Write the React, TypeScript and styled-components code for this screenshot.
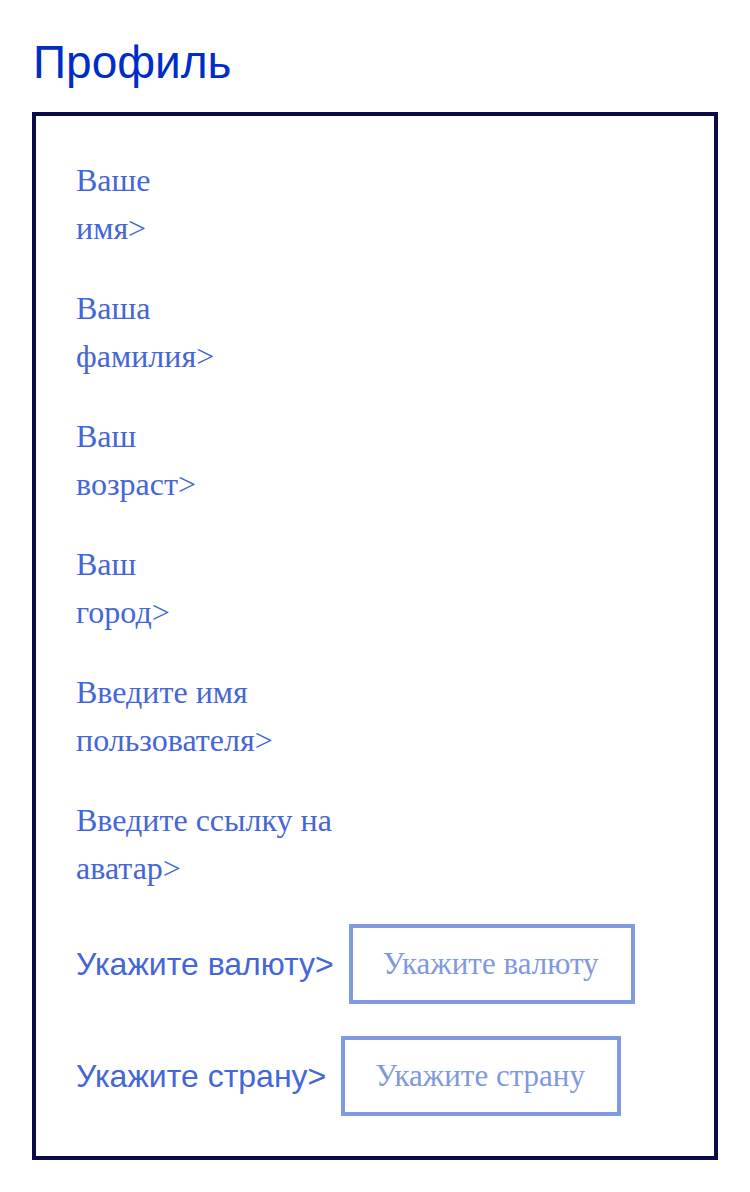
import React from "react";
import styled, { createGlobalStyle } from "styled-components";

const GlobalStyle = createGlobalStyle`
  body {
    margin: 0;
    background: #ffffff;
  }
`;

const SPagina = styled.div`
  padding: 36px 32px 0 32px;
  width: 686px;
`;

const STitulo = styled.h1`
  margin: 0 0 24px 1px;
  font-family: "Liberation Sans", Arial, sans-serif;
  font-weight: 400;
  font-size: 46px;
  line-height: 52px;
  color: #002cc8;
`;

const SCaja = styled.form`
  box-sizing: border-box;
  border: 4px solid #0b0b48;
  padding: 40px 40px 40px 40px;
  display: flex;
  flex-direction: column;
  gap: 32px;
`;

const SEtiqueta = styled.label`
  display: block;
  font-family: "Liberation Serif", "Times New Roman", serif;
  font-size: 32px;
  line-height: 48px;
  color: #4466d6;
`;

const SFila = styled.div`
  display: flex;
  align-items: center;
  gap: 15px;
`;

const SEtiquetaSans = styled.label`
  font-family: "Liberation Sans", Arial, sans-serif;
  font-size: 32px;
  color: #4466d6;
`;

const SCampo = styled.input<{ $ancho: number }>`
  box-sizing: border-box;
  height: 80px;
  width: ${(p) => p.$ancho}px;
  border: 4px solid #7f9ae0;
  padding: 0 0 0 30px;
  font-family: "Liberation Serif", "Times New Roman", serif;
  font-size: 31px;
  outline: none;
  &::placeholder {
    color: #8099de;
  }
`;

const etiquetas: [string, string][] = [
  ["Ваше", "имя>"],
  ["Ваша", "фамилия>"],
  ["Ваш", "возраст>"],
  ["Ваш", "город>"],
  ["Введите имя", "пользователя>"],
  ["Введите ссылку на", "аватар>"],
];

export default function App() {
  return (
    <>
      <GlobalStyle />
      <SPagina>
        <STitulo>Профиль</STitulo>
        <SCaja>
          {etiquetas.map(([a, b]) => (
            <SEtiqueta key={a + b}>
              {a}
              <br />
              {b}
            </SEtiqueta>
          ))}
          <SFila>
            <SEtiquetaSans>Укажите валюту&gt;</SEtiquetaSans>
            <SCampo $ancho={286} placeholder="Укажите валюту" />
          </SFila>
          <SFila>
            <SEtiquetaSans>Укажите страну&gt;</SEtiquetaSans>
            <SCampo $ancho={280} placeholder="Укажите страну" />
          </SFila>
        </SCaja>
      </SPagina>
    </>
  );
}
